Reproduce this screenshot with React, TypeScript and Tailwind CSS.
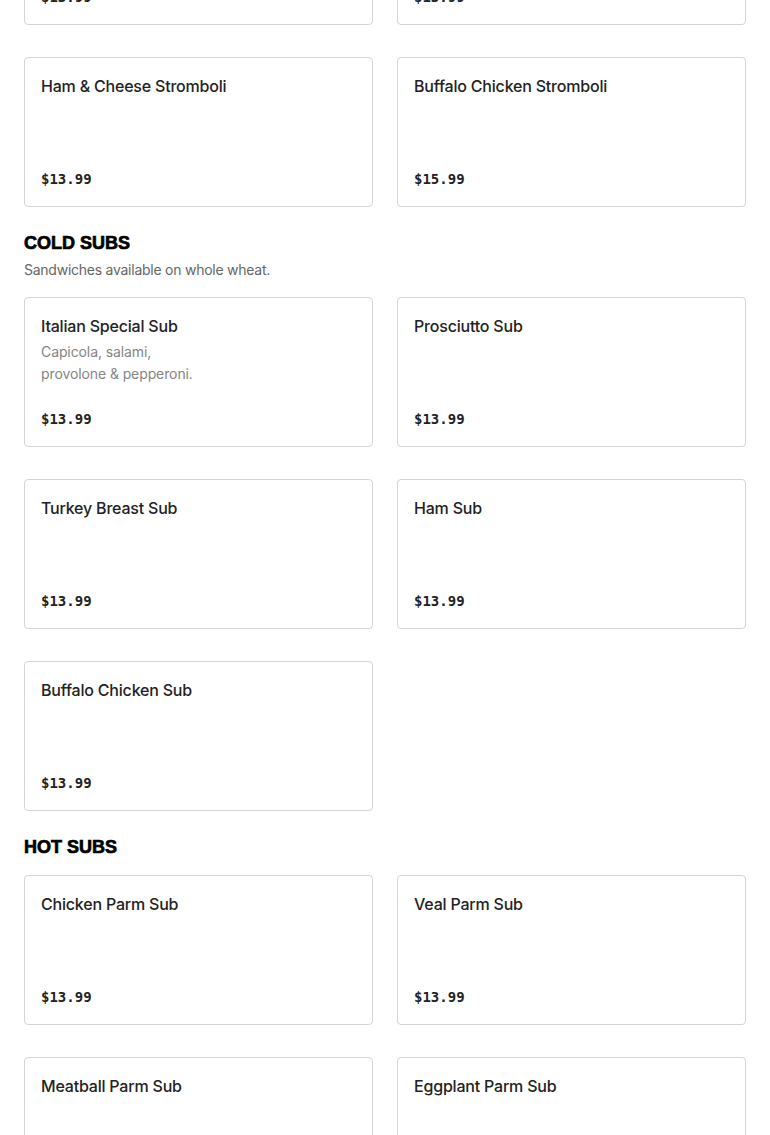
interface MenuItem {
  name: string;
  description?: string;
  price: string;
}

interface MenuSection {
  title?: string;
  subtitle?: string;
  items: MenuItem[];
}

const sections: MenuSection[] = [
  {
    items: [
      { name: 'Cheese Stromboli', price: '$13.99' },
      { name: 'Pepperoni Stromboli', price: '$13.99' },
      { name: 'Ham & Cheese Stromboli', price: '$13.99' },
      { name: 'Buffalo Chicken Stromboli', price: '$15.99' }
    ]
  },
  {
    title: 'COLD SUBS',
    subtitle: 'Sandwiches available on whole wheat.',
    items: [
      { name: 'Italian Special Sub', description: 'Capicola, salami, provolone & pepperoni.', price: '$13.99' },
      { name: 'Prosciutto Sub', price: '$13.99' },
      { name: 'Turkey Breast Sub', price: '$13.99' },
      { name: 'Ham Sub', price: '$13.99' },
      { name: 'Buffalo Chicken Sub', price: '$13.99' }
    ]
  },
  {
    title: 'HOT SUBS',
    items: [
      { name: 'Chicken Parm Sub', price: '$13.99' },
      { name: 'Veal Parm Sub', price: '$13.99' },
      { name: 'Meatball Parm Sub', price: '$13.99' },
      { name: 'Eggplant Parm Sub', price: '$13.99' }
    ]
  }
];

const ItemCard = ({ item }: { item: MenuItem }) => (
  <div className="flex h-[150px] flex-col justify-between rounded-[4px] border border-[#d4d4d4] bg-white px-4 pt-4 pb-4">
    <div>
      <h3 className="font-['Inter',sans-serif] text-[16px] leading-6 font-medium tracking-[-0.2px] text-[#222]">
        {item.name}
      </h3>
      {item.description && (
        <p className="mt-[3px] max-w-[170px] font-['Inter',sans-serif] text-[14px] leading-[22px] tracking-[-0.1px] text-[#858585]">
          {item.description}
        </p>
      )}
    </div>
    <div className="font-['DejaVu_Sans_Mono',monospace] text-[14px] leading-[22px] font-bold text-[#222]">
      {item.price}
    </div>
  </div>
);

const App = () => {
  return (
    <div className="min-h-screen overflow-hidden bg-white">
      <div className="-mt-[125px] px-6 pb-10">
        {sections.map((section, i) => (
          <div key={i} className={i > 0 ? 'mt-6' : ''}>
            {section.title && (
              <div className="mb-4">
                <h2 className="font-['Liberation_Sans',sans-serif] text-[18px] leading-6 font-black text-black [-webkit-text-stroke:0.7px_black]">
                  {section.title}
                </h2>
                {section.subtitle && (
                  <p className="mt-1 font-['Inter',sans-serif] text-[14px] leading-[22px] tracking-[-0.25px] text-[#666]">
                    {section.subtitle}
                  </p>
                )}
              </div>
            )}
            <div className="grid grid-cols-2 gap-x-6 gap-y-8">
              {section.items.map((item) => (
                <ItemCard key={item.name} item={item} />
              ))}
            </div>
          </div>
        ))}
      </div>
    </div>
  );
};

export default App;
